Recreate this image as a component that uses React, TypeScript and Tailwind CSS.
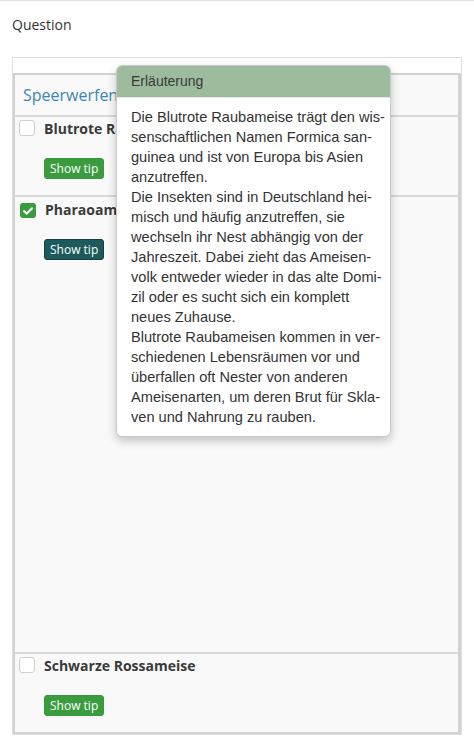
import React from 'react';

const tipLines = [
  'Die Blutrote Raubameise trägt den wis-',
  'senschaftlichen Namen Formica san-',
  'guinea und ist von Europa bis Asien',
  'anzutreffen.',
  'Die Insekten sind in Deutschland hei-',
  'misch und häufig anzutreffen, sie',
  'wechseln ihr Nest abhängig von der',
  'Jahreszeit. Dabei zieht das Ameisen-',
  'volk entweder wieder in das alte Domi-',
  'zil oder es sucht sich ein komplett',
  'neues Zuhause.',
  'Blutrote Raubameisen kommen in ver-',
  'schiedenen Lebensräumen vor und',
  'überfallen oft Nester von anderen',
  'Ameisenarten, um deren Brut für Skla-',
  'ven und Nahrung zu rauben.'
];

const answers = [
  { label: 'Blutrote Raubameise', checked: false, active: false, height: 'min-h-[80px]' },
  { label: 'Pharaoameise', checked: true, active: true, height: 'min-h-[457px]' },
  { label: 'Schwarze Rossameise', checked: false, active: false, height: 'min-h-[80px]' }
];

const Checkbox = ({ checked }: { checked: boolean }) => {
  if (checked) {
    return <span className="mt-[4px] ml-[1px] flex h-[15px] w-[16px] shrink-0 items-center justify-center rounded-[3px] bg-[#3a9a3e]">
        <svg width="10" height="8" viewBox="0 0 10 8" fill="none">
          <path d="M1.2 4.2 L3.8 6.6 L8.8 1.4" stroke="white" strokeWidth="2.2" strokeLinecap="round" strokeLinejoin="round" />
        </svg>
      </span>;
  }
  return <span className="mt-[1px] h-[16px] w-[16px] shrink-0 rounded-[3px] border border-[#cfcfcf] bg-white" />;
};

export default function App() {
  return <div className="relative min-h-[736px] border-t border-[#e3e3e3] bg-white px-3 pt-[14px] text-[#333] font-['Open_Sans',sans-serif]">
      <div className="text-[14px] leading-5">Question</div>
      <div className="mt-[22px] border border-[#dedede] bg-white pt-[15px]">
        <div className="border-2 border-r-[3px] border-[#d2d2d2] bg-[#f9f9f9]">
          {/* header */}
          <div className="flex h-[40px] items-center pl-[8px] text-[16px] text-[#3b86b8]">
            Speerwerfen
          </div>
          {/* answer rows */}
          {answers.map(a => <div key={a.label} className={`border-t-2 border-[#d9d9d9] pt-[2px] pl-[4px] ${a.height}`}>
              <div className="flex items-start gap-[9px]">
                <Checkbox checked={a.checked} />
                <span className={`text-[14px] font-bold leading-5 text-[#3a3a3a] ${a.checked ? 'mt-[1px]' : ''}`}>{a.label}</span>
              </div>
              <button className={`ml-[25px] mt-[19px] h-[21px] rounded-[3px] border px-[5px] text-[12px] leading-none text-white ${a.active ? 'border-[#123f3f] bg-[#1c5a5b]' : 'border-[#379a3b] bg-[#3b9c3f]'}`}>
                Show tip
              </button>
            </div>)}
        </div>
      </div>

      {/* tip popover */}
      <div className="absolute left-[116px] top-[64px] w-[275px] overflow-hidden rounded-[6px] border border-[#c8c8c8] bg-white shadow-[0_4px_10px_rgba(0,0,0,0.22)] font-['Liberation_Sans',Arial,sans-serif] text-[#333]">
        <div className="h-[32px] border-b border-[#e4ebe4] bg-[#9dbb9d] px-[14px] text-[14px] leading-[31px] text-[#3a3a3a]">
          Erläuterung
        </div>
        <div className="px-[14px] pt-[9px] pb-[9px] text-[14.6px] leading-5">
          {tipLines.map((line, i) => <div key={i} className="whitespace-nowrap">{line}</div>)}
        </div>
      </div>
    </div>;
}
